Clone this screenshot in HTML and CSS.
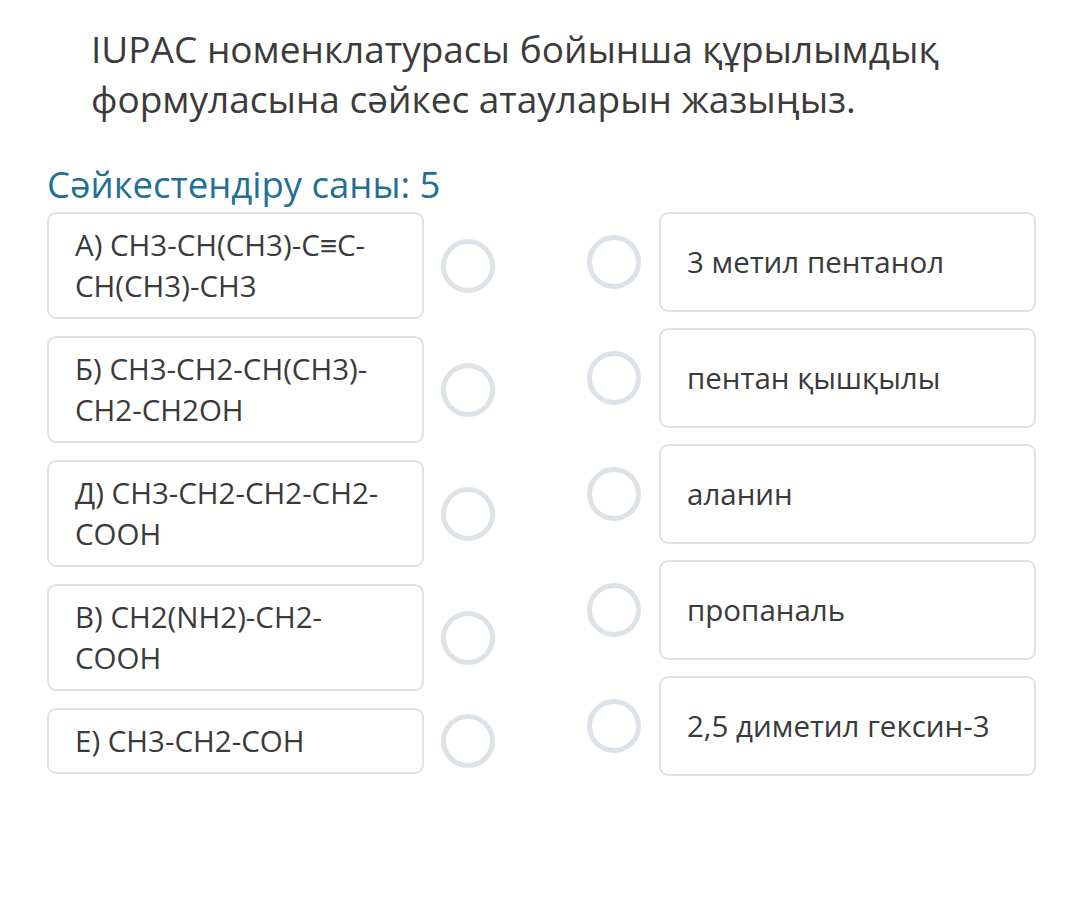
FILE: index.html
```html
<!DOCTYPE html>
<html lang="kk">
<head>
<meta charset="utf-8">
<link rel="stylesheet" href="styles.css">
</head>
<body>
<div class="page">
  <h1 class="question">IUPAC номенклатурасы бойынша құрылымдық формуласына сәйкес атауларын жазыңыз.</h1>
  <h2 class="count">Сәйкестендіру саны: 5</h2>
  <div class="match">
    <div class="col col-left">
      <div class="row"><div class="card card-left">А) CH3-CH(CH3)-C≡C-CH(CH3)-CH3</div><span class="dot"></span></div>
      <div class="row"><div class="card card-left">Б) CH3-CH2-CH(CH3)-CH2-CH2OH</div><span class="dot"></span></div>
      <div class="row"><div class="card card-left">Д) CH3-CH2-CH2-CH2-COOH</div><span class="dot"></span></div>
      <div class="row"><div class="card card-left">В) CH2(NH2)-CH2-COOH</div><span class="dot"></span></div>
      <div class="row"><div class="card card-left">Е) CH3-CH2-COH</div><span class="dot"></span></div>
    </div>
    <div class="col col-right">
      <div class="row"><span class="dot"></span><div class="card card-right">3 метил пентанол</div></div>
      <div class="row"><span class="dot"></span><div class="card card-right">пентан қышқылы</div></div>
      <div class="row"><span class="dot"></span><div class="card card-right">аланин</div></div>
      <div class="row"><span class="dot"></span><div class="card card-right">пропаналь</div></div>
      <div class="row"><span class="dot"></span><div class="card card-right">2,5 диметил гексин-3</div></div>
    </div>
  </div>
</div>
</body>
</html>
```

FILE: styles.css
```css
html, body {
  margin: 0;
  padding: 0;
  background: #ffffff;
}
.page {
  font-family: "Open Sans", "Noto Sans", sans-serif;
  color: #3a3a3a;
  padding: 24px 0 0 47px;
}
.question {
  margin: 0 0 0 44px;
  width: 920px;
  font-size: 37px;
  line-height: 50px;
  font-weight: 400;
  color: #3b3b3b;
}
.count {
  margin: 38px 0 0 0;
  font-size: 36.5px;
  line-height: 44px;
  font-weight: 400;
  color: #1f6f96;
}
.match {
  display: flex;
  margin-top: 6px;
}
.col {
  display: flex;
  flex-direction: column;
}
.col-left {
  gap: 17px;
}
.col-right {
  gap: 16px;
  margin-left: 92px;
}
.row {
  display: flex;
  align-items: center;
}
.card {
  box-sizing: border-box;
  width: 377px;
  border: 2px solid #dfe3e7;
  border-radius: 9px;
  background: #fff;
  font-size: 29.5px;
  line-height: 41px;
  color: #3a3a3a;
  display: flex;
  align-items: center;
}
.card-left {
  padding: 10px 16px 11px 26px;
  min-height: 66px;
}
.card-right {
  height: 100px;
  padding: 0 16px 2px 26px;
}
.dot {
  box-sizing: border-box;
  width: 54px;
  height: 54px;
  border: 5px solid #dde2e7;
  border-radius: 50%;
  flex: none;
}
.card-left + .dot {
  margin-left: 17px;
}
.col-right .dot {
  margin-right: 18px;
}
```
